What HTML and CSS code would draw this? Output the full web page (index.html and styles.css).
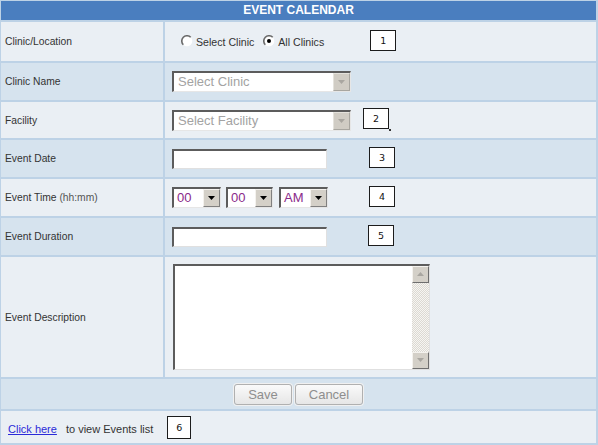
FILE: index.html
```html
<!DOCTYPE html>
<html>
<head>
<meta charset="utf-8">
<title>Event Calendar</title>
<link rel="stylesheet" href="styles.css">
</head>
<body>
<div class="cal">
  <div class="hdr">EVENT CALENDAR</div>

  <div class="lbl lt">Clinic/Location</div>
  <div class="fld lt">
    <div class="radios">
      <label class="rad"><svg width="12" height="12" viewBox="0 0 12 12"><circle cx="6" cy="6" r="5.3" fill="#fff"/><path d="M2.3 9.7A5.2 5.2 0 0 1 9.7 2.3" fill="none" stroke="#6a6a6a" stroke-width="1.6"/></svg>Select Clinic</label>
      <label class="rad"><svg width="12" height="12" viewBox="0 0 12 12"><circle cx="6" cy="6" r="5.3" fill="#fff"/><path d="M2.3 9.7A5.2 5.2 0 0 1 9.7 2.3" fill="none" stroke="#6a6a6a" stroke-width="1.6"/><circle cx="6" cy="6" r="2" fill="#000"/></svg>All Clinics</label>
    </div>
    <span class="num m46">1</span>
  </div>

  <div class="lbl dk">Clinic Name</div>
  <div class="fld dk">
    <div class="sel dis w179"><span class="txt">Select Clinic</span><span class="arr"><svg width="7" height="4" viewBox="0 0 7 4"><path d="M0 0h7L3.5 4z" fill="#a9a6a0"/></svg></span></div>
  </div>

  <div class="lbl lt">Facility</div>
  <div class="fld lt">
    <div class="sel dis w179"><span class="txt">Select Facility</span><span class="arr"><svg width="7" height="4" viewBox="0 0 7 4"><path d="M0 0h7L3.5 4z" fill="#a9a6a0"/></svg></span></div>
    <span class="num m12 tick">2</span>
  </div>

  <div class="lbl dk">Event Date</div>
  <div class="fld dk">
    <div class="inp"></div>
    <span class="num m42">3</span>
  </div>

  <div class="lbl lt">Event Time <span class="hint">(hh:mm)</span></div>
  <div class="fld lt">
    <div class="sel w49"><span class="txt val">00</span><span class="arr"><svg width="7" height="4" viewBox="0 0 7 4"><path d="M0 0h7L3.5 4z" fill="#000"/></svg></span></div>
    <div class="sel w47 ml5"><span class="txt val">00</span><span class="arr"><svg width="7" height="4" viewBox="0 0 7 4"><path d="M0 0h7L3.5 4z" fill="#000"/></svg></span></div>
    <div class="sel w49 ml6"><span class="txt val">AM</span><span class="arr"><svg width="7" height="4" viewBox="0 0 7 4"><path d="M0 0h7L3.5 4z" fill="#000"/></svg></span></div>
    <span class="num m41">4</span>
  </div>

  <div class="lbl dk">Event Duration</div>
  <div class="fld dk">
    <div class="inp"></div>
    <span class="num m41">5</span>
  </div>

  <div class="lbl lt">Event Description</div>
  <div class="fld lt">
    <div class="ta">
      <div class="sb">
        <span class="sbtn"><svg width="7" height="4" viewBox="0 0 7 4"><path d="M0 4h7L3.5 0z" fill="#a9a6a0"/></svg></span>
        <span class="track"></span>
        <span class="sbtn"><svg width="7" height="4" viewBox="0 0 7 4"><path d="M0 0h7L3.5 4z" fill="#a9a6a0"/></svg></span>
      </div>
    </div>
  </div>

  <div class="btns dk">
    <button class="btn save" type="button">Save</button>
    <button class="btn cancel" type="button">Cancel</button>
  </div>

  <div class="foot lt">
    <a href="#" class="lnk">Click here</a>
    <span class="ftxt">to view Events list</span>
    <span class="num n6">6</span>
  </div>
</div>
</body>
</html>
```

FILE: styles.css
```css
* { box-sizing: border-box; }

body {
  margin: 0;
  background: #ffffff;
  font-family: "Liberation Sans", Arial, sans-serif;
  font-size: 11px;
  color: #333333;
}

.cal {
  width: 598px;
  height: 445px;
  display: grid;
  grid-template-columns: 162px 1fr;
  grid-template-rows: 19px 39px 37px 36px 37px 37px 37px 120px 30px 32px;
  gap: 2px;
  padding: 1px 2px 2px 1px;
  background: #bdd2e6;
}

.hdr {
  grid-column: 1 / -1;
  background: #4a7ebf;
  color: #ffffff;
  font-weight: bold;
  font-size: 12px;
  line-height: 19px;
  text-align: center;
}

.lt { background: #eaeff4; }
.dk { background: #d6e3ee; }

.lbl {
  display: flex;
  align-items: center;
  padding-left: 4px;
  font-size: 10.3px;
  color: #333333;
  white-space: pre;
}

.hint { color: #555555; }

.fld {
  display: flex;
  align-items: center;
  padding-left: 7px;
}

.radios {
  display: flex;
  align-items: center;
  margin-left: 9px;
  gap: 9px;
}

.rad {
  display: flex;
  align-items: center;
  gap: 3px;
  font-size: 10.6px;
  color: #333333;
}

.rad svg { margin-bottom: 2px; }

.num {
  width: 26px;
  height: 21px;
  border: 1.5px solid #1c1c1c;
  background: #ffffff;
  font-family: "DejaVu Sans", Verdana, sans-serif;
  font-size: 9.5px;
  color: #111111;
  display: flex;
  align-items: center;
  justify-content: center;
  margin-bottom: 3px;
  position: relative;
}

.m46 { margin-left: 46px; }
.m12 { margin-left: 12px; }
.m42 { margin-left: 42px; }
.m41 { margin-left: 41px; }

.tick::after {
  content: "";
  position: absolute;
  right: -3px;
  bottom: -3px;
  width: 2px;
  height: 2px;
  background: #333333;
}

.sel {
  display: flex;
  height: 21px;
  background: #ffffff;
  border-style: solid;
  border-width: 2px 1px 1px 2px;
  border-color: #5c5c5c #e6e6e6 #e6e6e6 #5c5c5c;
}

.w179 { width: 179px; }
.w49 { width: 49px; }
.w47 { width: 47px; }
.ml5 { margin-left: 5px; }
.ml6 { margin-left: 6px; }

.sel .txt {
  flex: 1;
  padding-left: 4px;
  font-size: 13px;
  line-height: 18px;
  color: #a3a3a3;
}

.sel .txt.val { color: #8a2a8a; padding-left: 3px; }

.sel .arr {
  width: 17px;
  display: flex;
  align-items: center;
  justify-content: center;
  background: #d4d0c8;
  border-style: solid;
  border-width: 1px;
  border-color: #f4f2ee #808080 #808080 #f4f2ee;
}

.sel.dis .arr {
  background: #d0ccc4;
  border-color: #e4e2dc #a8a6a0 #a8a6a0 #e4e2dc;
}

.inp {
  width: 155px;
  height: 20px;
  background: #ffffff;
  border-style: solid;
  border-width: 2px 1px 1px 2px;
  border-color: #5c5c5c #e0e0e0 #e0e0e0 #5c5c5c;
}

.ta {
  width: 257px;
  height: 106px;
  margin-left: 1px;
  margin-bottom: 1px;
  background: #ffffff;
  border-style: solid;
  border-width: 2px 1px 1px 2px;
  border-color: #5c5c5c #e0e0e0 #e0e0e0 #5c5c5c;
  display: flex;
  justify-content: flex-end;
}

.sb {
  width: 17px;
  display: flex;
  flex-direction: column;
}

.sbtn {
  height: 17px;
  display: flex;
  align-items: center;
  justify-content: center;
  background: #d4d0c8;
  border-style: solid;
  border-width: 1px;
  border-color: #f4f2ee #6e6e6e #6e6e6e #f4f2ee;
}

.track {
  flex: 1;
  background: repeating-conic-gradient(#f6f5f2 0 25%, #dcd9d2 0 50%) 0 0 / 2px 2px;
}

.btns {
  grid-column: 1 / -1;
  display: flex;
  align-items: center;
  justify-content: center;
  gap: 3px;
  padding-top: 1px;
}

.btn {
  height: 21px;
  margin: 0;
  padding: 0;
  font-family: "Liberation Sans", Arial, sans-serif;
  font-size: 13px;
  color: #8e8e8e;
  background: linear-gradient(#fafafa, #e6e6e6);
  border: 1px solid #b0b0b0;
  border-radius: 3px;
  box-shadow: 0 0 0 1px #f0f0f0;
}

.save { width: 58px; }
.cancel { width: 68px; }

.foot {
  grid-column: 1 / -1;
  display: flex;
  align-items: center;
  padding-left: 7px;
  font-size: 11px;
}

.lnk {
  color: #2a2ad8;
  text-decoration: underline;
  padding-top: 3px;
}

.ftxt {
  margin-left: 9px;
  padding-top: 3px;
  color: #333333;
}

.num.n6 {
  width: 24px;
  height: 23px;
  margin-left: 14px;
  margin-bottom: 0;
}
```
